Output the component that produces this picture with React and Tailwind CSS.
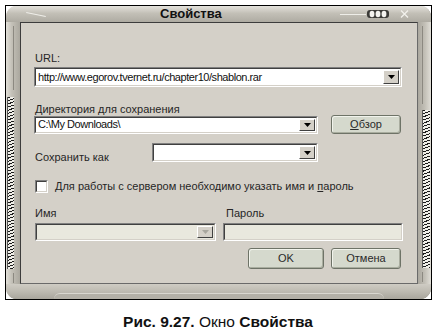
import React from 'react';

const Arrow = ({ disabled }) => (
  <div className="w-[16px] h-full flex items-center justify-center bg-[#d4d0c8] border border-t-white border-l-white border-r-[#404040] border-b-[#404040]">
    <svg width="7" height="4" viewBox="0 0 7 4">
      <polygon points="0,0 7,0 3.5,4" fill={disabled ? '#a8a69e' : '#000'} />
    </svg>
  </div>
);

const Combo = ({ className, value, disabled }) => (
  <div className={`${className} flex border border-t-[#808080] border-l-[#808080] border-r-white border-b-white`}>
    <div
      className={`flex-1 flex border border-t-[#404040] border-l-[#404040] border-r-[#d4d0c8] border-b-[#d4d0c8] ${
        disabled ? 'bg-[#e9e8de]' : 'bg-white'
      }`}
    >
      <div className="flex-1 pl-[2px] flex items-center whitespace-nowrap overflow-hidden text-[11px] tracking-[-0.45px] text-[#111]">
        {value}
      </div>
      <div className="p-px">
        <Arrow disabled={disabled} />
      </div>
    </div>
  </div>
);

const Button = ({ className, children }) => (
  <div
    className={`${className} flex items-center justify-center rounded-[3px] border border-[#6e7367] bg-[#d5d9cd] shadow-[inset_1px_1px_0_#f1f3ec,inset_-1px_-1px_0_#a9ad9f] text-[#2a2a2a]`}
  >
    {children}
  </div>
);

const Chain = ({ className }) => (
  <div
    className={`${className} bg-[repeating-linear-gradient(160deg,#1c1c1c_0px,#1c1c1c_1px,#f0efe9_1px,#f0efe9_3px)] border-l border-[#555]`}
  />
);

export default function App() {
  return (
    <div className="w-[436px] h-[331px] bg-white pt-[5px] pl-[5px] font-['Liberation_Sans',Arial,sans-serif]">
      <div className="w-[427px] h-[295px] border border-black bg-white">
        <div className="w-full h-full rounded-[11px] bg-[#bdbab1] flex flex-col overflow-hidden shadow-[inset_1px_1px_0_#e9e7e1,inset_-1px_-1px_0_#8d8a82]">
          {/* title bar */}
          <div className="h-[16px] flex items-center bg-[linear-gradient(180deg,#e4e2dc_0%,#c3c0b7_45%,#aeaba2_100%)]">
            <div className="ml-[20px] w-[20px] h-px bg-[#efeee9] rotate-[12deg]" />
            <div className="ml-[114px] text-[13px] leading-[16px] font-bold text-[#111]">Свойства</div>
            <div className="ml-[118px] w-[26px] h-px bg-[#eeede8]" />
            <svg className="ml-[1px]" width="22" height="9" viewBox="0 0 22 9">
              <rect x="0" y="0" width="22" height="8" rx="3" fill="#3b3a37" />
              <ellipse cx="5" cy="4" rx="2.4" ry="3.2" fill="#f4f3ef" />
              <ellipse cx="11" cy="4" rx="2.4" ry="3.2" fill="#f4f3ef" />
              <ellipse cx="17" cy="4" rx="2.4" ry="3.2" fill="#f4f3ef" />
            </svg>
            <svg className="ml-[11px]" width="9" height="8" viewBox="0 0 9 8">
              <path d="M1 0.5 L8 7.5 M8 0.5 L1 7.5" stroke="#f2f1ec" strokeWidth="1.3" />
            </svg>
          </div>

          <div className="flex h-[262px]">
            {/* left frame */}
            <div className="w-[14px] flex flex-col bg-[linear-gradient(90deg,#e2e0d9_0%,#c4c1b8_40%,#aaa79e_100%)]">
              <div className="ml-[7px] mt-[4px] w-px h-[64px] bg-[#8c8981]" />
              <Chain className="ml-[1px] mt-[7px] w-[7px] h-[172px]" />
              <div className="ml-[7px] mt-[4px] w-px h-[10px] bg-[#8c8981]" />
            </div>

            {/* content */}
            <div className="w-[398px] border border-t-[#3c3c3c] border-l-[#3c3c3c] border-r-[#6a6a6a] border-b-[#6a6a6a] bg-[#d4d0c8] pt-[29px] text-[11px] text-[#262626]">
              <div className="ml-[14px] h-[13px] leading-[13px]">URL:</div>
              <Combo
                className="mt-[2px] ml-[13px] w-[368px] h-[20px]"
                value="http://www.egorov.tvernet.ru/chapter10/shablon.rar"
              />

              <div className="ml-[14px] mt-[16px] h-[12px] leading-[12px]">Директория для сохранения</div>
              <div className="ml-[13px] h-[19px] flex items-center">
                <Combo className="w-[284px] h-[18px]" value="C:\My Downloads\" />
                <Button className="ml-[13px] w-[70px] h-[19px]">
                  <span>
                    <span className="underline">О</span>бзор
                  </span>
                </Button>
              </div>

              <div className="mt-[9px] h-[19px] flex items-start">
                <div className="ml-[14px] w-[117px] mt-[8px] leading-[13px]">Сохранить как</div>
                <Combo className="w-[166px] h-[19px]" value="" />
              </div>

              <div className="mt-[18px] h-[13px] flex items-center">
                <div className="ml-[14px] w-[13px] h-[13px] bg-white border border-t-[#808080] border-l-[#808080] border-r-white border-b-white">
                  <div className="w-full h-full border border-t-[#404040] border-l-[#404040] border-r-[#d4d0c8] border-b-[#d4d0c8]" />
                </div>
                <div className="ml-[7px] leading-[13px]">
                  Для работы с сервером необходимо указать имя и <span className="underline">п</span>ароль
                </div>
              </div>

              <div className="mt-[14px] h-[13px] flex leading-[13px]">
                <div className="ml-[14px] w-[191px]">Имя</div>
                <div>Пароль</div>
              </div>

              <div className="mt-[3px] h-[18px] flex">
                <Combo className="ml-[14px] w-[181px] h-[18px]" value="" disabled />
                <div className="ml-[7px] w-[180px] h-[18px] border border-t-[#808080] border-l-[#808080] border-r-white border-b-white">
                  <div className="w-full h-full bg-[#e9e8de] border border-t-[#404040] border-l-[#404040] border-r-[#d4d0c8] border-b-[#d4d0c8]" />
                </div>
              </div>

              <div className="mt-[7px] h-[21px] flex justify-end pr-[16px]">
                <Button className="w-[76px] h-[21px]">OK</Button>
                <Button className="ml-[7px] w-[70px] h-[21px]">Отмена</Button>
              </div>
            </div>

            {/* right frame */}
            <div className="w-[13px] flex flex-col items-end bg-[linear-gradient(90deg,#aaa79e_0%,#c4c1b8_55%,#e0ded7_100%)]">
              <div className="mr-[8px] mt-[4px] w-px h-[78px] bg-[#8c8981]" />
              <Chain className="mr-[1px] mt-[6px] w-[8px] h-[158px]" />
              <div className="mr-[8px] mt-[4px] w-px h-[10px] bg-[#8c8981]" />
            </div>
          </div>

          {/* bottom frame */}
          <div className="flex-1 bg-[linear-gradient(180deg,#cfccc4_0%,#bdbab1_50%,#a9a69d_100%)] flex items-end justify-center">
            <div className="w-[330px] h-[6px] rounded-t-[6px] bg-[#b3b0a7] border-t border-[#d9d7d0]" />
          </div>
        </div>
      </div>

      <div className="mt-[14px] -ml-[5px] text-center text-[15.5px] leading-[16px] text-[#111]">
        <span className="font-bold">Рис. 9.27.</span> Окно <span className="font-bold">Свойства</span>
      </div>
    </div>
  );
}
